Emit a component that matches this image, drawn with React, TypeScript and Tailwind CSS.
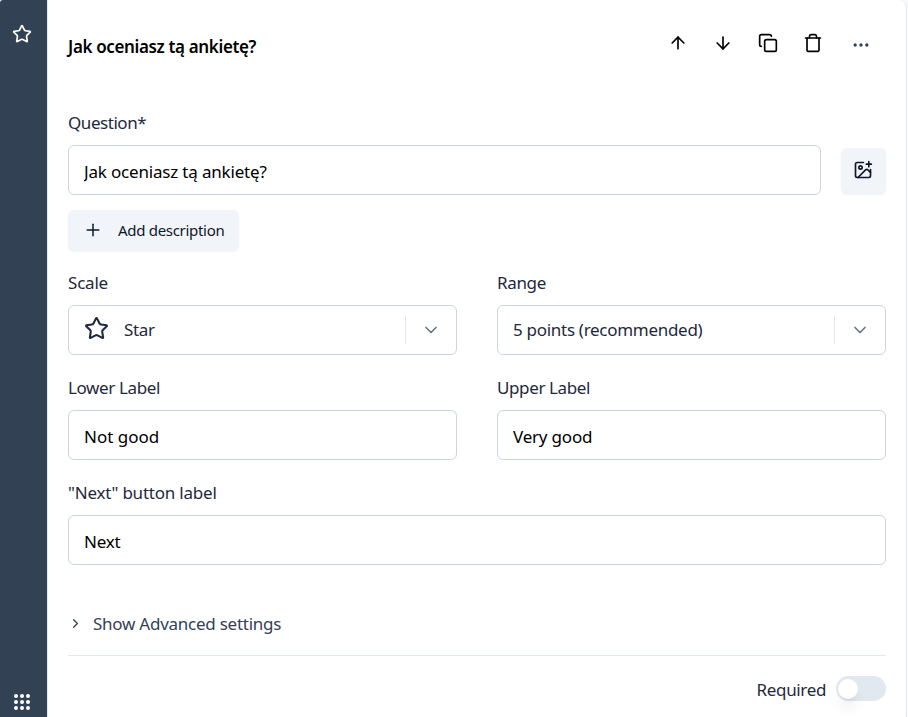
import {
  ArrowDown,
  ArrowUp,
  ChevronDown,
  ChevronRight,
  Copy,
  Ellipsis,
  ImagePlus,
  Plus,
  Star,
} from "lucide-react";
import type { ReactNode } from "react";

const box = "h-[50px] w-full rounded-md border border-[#cbd5e1] bg-white";

function TrashIcon() {
  return (
    <svg
      width="20"
      height="20"
      viewBox="0 0 24 24"
      fill="none"
      stroke="currentColor"
      strokeWidth="2"
      strokeLinecap="round"
      strokeLinejoin="round"
    >
      <path d="M3 6h18" />
      <path d="M19.2 6v14.6a1.4 1.4 0 0 1-1.4 1.4H6.2a1.4 1.4 0 0 1-1.4-1.4V6" />
      <path d="M7.8 6V4c0-1 .8-2 1.8-2h4.8c1 0 1.8 1 1.8 2v2" />
    </svg>
  );
}

function DragDots() {
  return (
    <div className="grid grid-cols-3 gap-[2px]">
      {Array.from({ length: 9 }, (_, i) => (
        <span key={i} className="size-1 rounded-full bg-white" />
      ))}
    </div>
  );
}

function Field({ label, tracking, children }: { label: string; tracking: string; children: ReactNode }) {
  return (
    <div className="flex flex-1 flex-col">
      <label className={`h-6 pt-px leading-6 text-[#1e293b] ${tracking}`}>{label}</label>
      <div className="mt-[11px] flex">{children}</div>
    </div>
  );
}

function TextBox({ value, tracking }: { value: string; tracking: string }) {
  return (
    <input
      readOnly
      value={value}
      className={`${box} px-[15px] pt-[3px] text-black outline-none ${tracking}`}
    />
  );
}

function SelectBox({ children }: { children: ReactNode }) {
  return (
    <button className={`${box} flex items-center pl-[15px] text-left text-[#1e293b]`}>
      <span className="flex flex-1 items-center">{children}</span>
      <span className="flex h-7 w-[51px] items-center justify-center border-l border-[#e2e8f0] text-[#64748b]">
        <ChevronDown size={20} />
      </span>
    </button>
  );
}

export default function App() {
  return (
    <div className="flex h-[717px] w-[908px] overflow-hidden bg-[#f8fafc] font-['Noto_Sans','Open_Sans',sans-serif] text-[17px]">
      <aside className="flex w-[47px] shrink-0 flex-col items-center justify-between rounded-tl-[3px] bg-[#334155] pr-[3px] pt-6 pb-[7px] text-white">
        <Star size={20} />
        <DragDots />
      </aside>
      <main className="flex h-[722px] w-[860px] shrink-0 flex-col rounded-r-lg border-x border-[#e2e8f0] bg-white px-5">
        <header className="flex h-[90px] items-start justify-between">
          <h3 className="mt-[35px] leading-6 font-semibold tracking-[-0.36px] text-black">
            Jak oceniasz tą ankietę?
          </h3>
          <div className="mt-[33px] mr-[18px] flex gap-[25px] text-black">
            <ArrowUp size={20} />
            <ArrowDown size={20} />
            <Copy size={20} />
            <TrashIcon />
            <Ellipsis size={20} className="relative top-[2px] left-[3px] text-[#334155]" />
          </div>
        </header>

        <div className="mt-5 flex items-end">
          <Field label="Question*" tracking="tracking-[-0.45px]">
            <TextBox value="Jak oceniasz tą ankietę?" tracking="tracking-[-0.18px]" />
          </Field>
          <button className="mb-px ml-5 flex h-[46px] w-[45px] items-center justify-center rounded-md bg-[#f1f5f9] pr-px pb-[2px] text-[#0f172a] shadow-xs">
            <ImagePlus size={20} />
          </button>
        </div>

        <button className="mt-[15px] flex h-[41px] w-[171px] items-center rounded-md bg-[#f1f5f9] pl-[15px] text-[15px] tracking-[-0.3px] whitespace-nowrap text-[#0f172a] shadow-xs">
          <Plus size={20} strokeWidth={1.8} className="mb-px" />
          <span className="ml-[15px]">Add description</span>
        </button>

        <div className="mt-[19px] flex gap-10">
          <Field label="Scale" tracking="tracking-[-0.2px]">
            <SelectBox>
              <Star size={25} className="mb-[3px]" />
              <span className="ml-[15px] tracking-[-0.35px]">Star</span>
            </SelectBox>
          </Field>
          <Field label="Range" tracking="tracking-[-0.35px]">
            <SelectBox>
              <span className="tracking-[-0.29px]">5 points (recommended)</span>
            </SelectBox>
          </Field>
        </div>

        <div className="mt-5 flex gap-10">
          <Field label="Lower Label" tracking="tracking-[-0.38px]">
            <TextBox value="Not good" tracking="tracking-normal" />
          </Field>
          <Field label="Upper Label" tracking="tracking-[-0.38px]">
            <TextBox value="Very good" tracking="tracking-[-0.2px]" />
          </Field>
        </div>

        <div className="mt-5 flex">
          <Field label={'"Next" button label'} tracking="tracking-[-0.22px]">
            <TextBox value="Next" tracking="tracking-[-0.25px]" />
          </Field>
        </div>

        <button className="mt-[46px] flex h-6 items-center text-[#334155]">
          <ChevronRight size={15} />
          <span className="ml-[10px] pt-px tracking-[-0.25px]">Show Advanced settings</span>
        </button>

        <footer className="mt-5 flex h-[61px] items-start justify-end border-t border-[#e2e8f0] pt-5">
          <span className="mr-[10px] leading-[27px] tracking-[-0.35px] text-[#1e293b]">Required</span>
          <span className="flex h-[25px] w-[50px] items-center rounded-full bg-[#e2e8f0] pl-[2px]">
            <span className="size-5 rounded-full bg-white shadow-lg" />
          </span>
        </footer>
      </main>
    </div>
  );
}
